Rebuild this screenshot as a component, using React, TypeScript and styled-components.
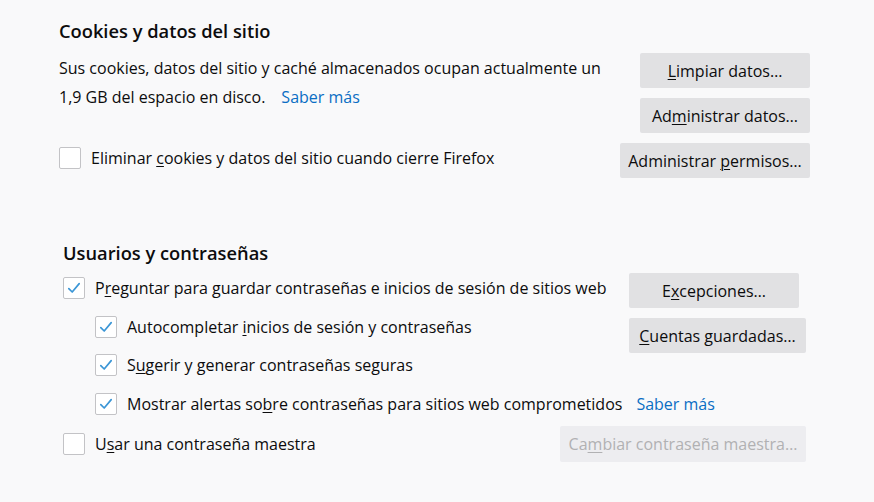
import styled, { createGlobalStyle } from "styled-components";

const Global = createGlobalStyle`
  html, body {
    margin: 0;
    padding: 0;
    background: #f9f9fa;
  }
  body {
    font-family: "Open Sans", "Noto Sans", sans-serif;
    color: #0c0c0d;
    font-size: 16px;
  }
`;

const Page = styled.div`
  width: 874px;
  height: 502px;
  box-sizing: border-box;
  padding-top: 19px;
  overflow: hidden;
`;

const Section = styled.section<{ $left: number; $right: number }>`
  padding-left: ${({ $left }) => $left}px;
  padding-right: ${({ $right }) => $right}px;
  & + & {
    margin-top: 63px;
  }
`;

const Heading = styled.h2`
  margin: 0;
  font-size: 18.3px;
  font-weight: 600;
  line-height: 24px;
`;

const CookieGrid = styled.div`
  margin-top: 10px;
  display: grid;
  grid-template-columns: 1fr auto;
  row-gap: 10px;
  justify-items: end;
`;

const Paragraph = styled.p`
  justify-self: start;
  margin: 0;
  padding-top: 1px;
  line-height: 29px;
  white-space: nowrap;
`;

const ButtonStack = styled.div<{ $pad?: number; $align?: string }>`
  display: flex;
  flex-direction: column;
  align-items: ${({ $align }) => $align || "flex-end"};
  gap: 10px;
  padding-top: ${({ $pad }) => $pad || 0}px;
`;

const Button = styled.button<{ $w: number; $h?: number; $mr?: number }>`
  width: ${({ $w }) => $w}px;
  height: ${({ $h }) => $h || 35}px;
  margin-right: ${({ $mr }) => $mr || 0}px;
  border: none;
  border-radius: 2px;
  background: #e1e1e3;
  color: #0c0c0d;
  font-family: inherit;
  font-size: 16px;
  padding: 0;
  white-space: nowrap;
  &:disabled {
    background: #ededf0;
    color: #b1b1b3;
  }
`;

const Key = styled.span`
  text-decoration: underline;
  text-underline-offset: 2px;
  text-decoration-thickness: 1px;
`;

const Link = styled.a`
  color: #0a6ec4;
  text-decoration: none;
  margin-left: 16px;
`;

const Row = styled.label<{ $indent?: number; $span?: boolean; $pb?: number }>`
  justify-self: start;
  display: flex;
  align-items: center;
  gap: 10px;
  padding-left: ${({ $indent }) => $indent || 0}px;
  padding-bottom: ${({ $pb }) => $pb || 0}px;
  white-space: nowrap;
  ${({ $span }) => ($span ? "grid-column: 1 / -1;" : "")}
`;

const ListRow = styled(Row)`
  height: 38.5px;
`;

const Box = styled.span`
  flex: none;
  width: 20px;
  height: 20px;
  border: 1px solid #c3c3c6;
  border-radius: 2px;
  background: #fff;
  display: flex;
  align-items: center;
  justify-content: center;
`;

const PasswordGrid = styled.div`
  margin-top: 4px;
  display: grid;
  grid-template-columns: 1fr 177px;
  grid-template-rows: repeat(4, 38.5px);
  justify-items: start;
`;

const ButtonColumn = styled(ButtonStack)`
  grid-column: 2;
  grid-row: 1 / span 3;
`;

const FooterRow = styled.div`
  margin-top: 3px;
  display: flex;
  align-items: center;
  justify-content: space-between;
`;

const LinkInline = styled(Link)`
  margin-left: 14px;
`;

function Check({ checked }: { checked?: boolean }) {
  return (
    <Box>
      {checked && (
        <svg width="16" height="16" viewBox="0 0 16 16">
          <path d="M2.8 8.6 L6.2 12 L13.2 3.6" fill="none" stroke="#3b96d6" strokeWidth="1.7" strokeLinecap="round" strokeLinejoin="round" />
        </svg>
      )}
    </Box>
  );
}

export default function App() {
  return (
    <>
      <Global />
      <Page>
        <Section $left={59} $right={64}>
          <Heading>Cookies y datos del sitio</Heading>
          <CookieGrid>
            <Paragraph>
              Sus cookies, datos del sitio y caché almacenados ocupan actualmente un
              <br />
              1,9 GB del espacio en disco.
              <Link href="#">Saber más</Link>
            </Paragraph>
            <ButtonStack>
              <Button $w={170}>
                <Key>L</Key>impiar datos…
              </Button>
              <Button $w={170}>
                Ad<Key>m</Key>inistrar datos…
              </Button>
            </ButtonStack>
            <Row $pb={6}>
              <Check />
              <span>
                Eliminar <Key>c</Key>ookies y datos del sitio cuando cierre Firefox
              </span>
            </Row>
            <Button $w={190}>
              Administrar <Key>p</Key>ermisos…
            </Button>
          </CookieGrid>
        </Section>

        <Section $left={63} $right={68}>
          <Heading>Usuarios y contraseñas</Heading>
          <PasswordGrid>
            <ListRow>
              <Check checked />
              <span>
                P<Key>r</Key>eguntar para guardar contraseñas e inicios de sesión de sitios web
              </span>
            </ListRow>
            <ButtonColumn $pad={4} $align="flex-start">
              <Button $w={170}>
                E<Key>x</Key>cepciones…
              </Button>
              <Button $w={177}>
                <Key>C</Key>uentas guardadas…
              </Button>
            </ButtonColumn>
            <ListRow $indent={32}>
              <Check checked />
              <span>
                Autocompletar <Key>i</Key>nicios de sesión y contraseñas
              </span>
            </ListRow>
            <ListRow $indent={32}>
              <Check checked />
              <span>
                S<Key>u</Key>gerir y generar contraseñas seguras
              </span>
            </ListRow>
            <ListRow $indent={32} $span>
              <Check checked />
              <span>
                Mostrar alertas so<Key>b</Key>re contraseñas para sitios web comprometidos
                <LinkInline href="#">Saber más</LinkInline>
              </span>
            </ListRow>
          </PasswordGrid>
          <FooterRow>
            <Row>
              <Check />
              <span>
                U<Key>s</Key>ar una contraseña maestra
              </span>
            </Row>
            <Button $w={246} $h={36} disabled>
              Ca<Key>m</Key>biar contraseña maestra…
            </Button>
          </FooterRow>
        </Section>
      </Page>
    </>
  );
}
